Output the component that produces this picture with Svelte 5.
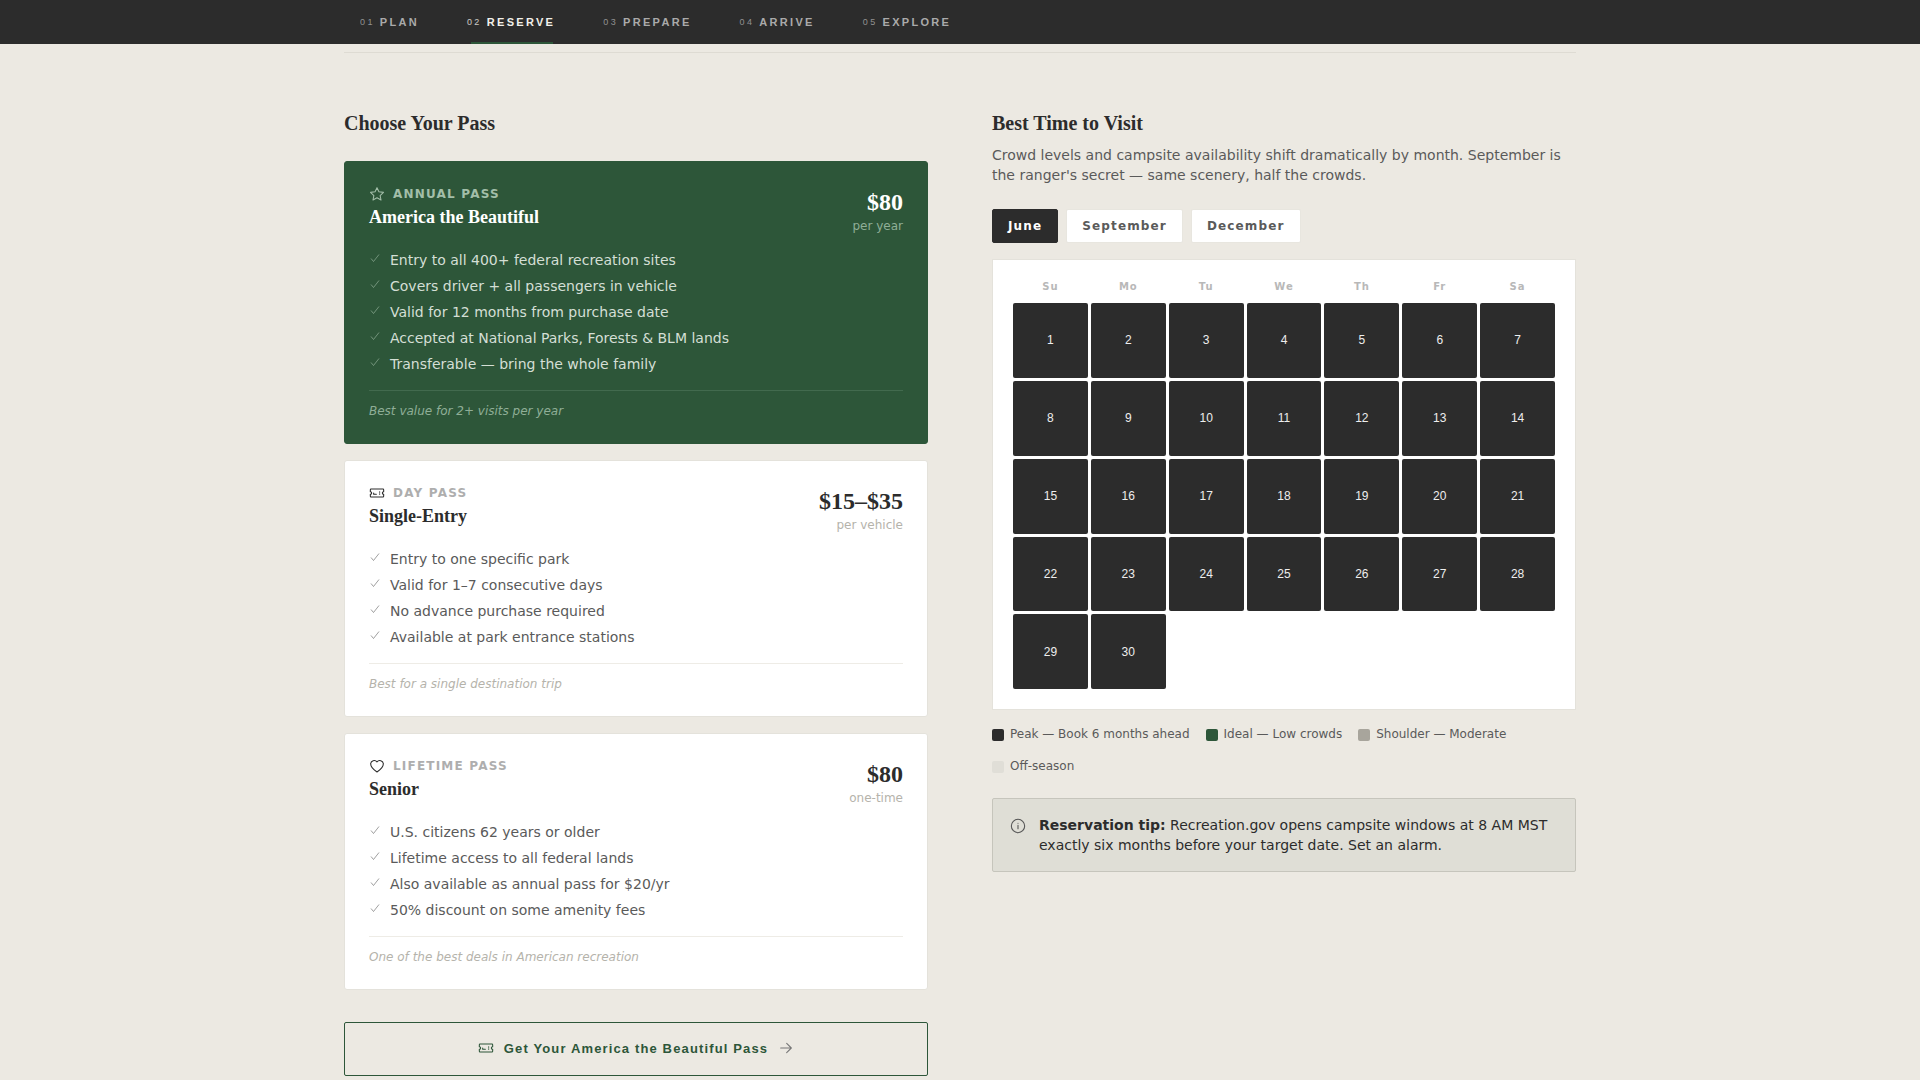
<script>
  const steps = [
    { num: '01', label: 'Plan' },
    { num: '02', label: 'Reserve', active: true },
    { num: '03', label: 'Prepare' },
    { num: '04', label: 'Arrive' },
    { num: '05', label: 'Explore' }
  ];

  const passes = [
    {
      icon: 'star',
      kind: 'Annual Pass',
      title: 'America the Beautiful',
      price: '$80',
      per: 'per year',
      featured: true,
      features: [
        'Entry to all 400+ federal recreation sites',
        'Covers driver + all passengers in vehicle',
        'Valid for 12 months from purchase date',
        'Accepted at National Parks, Forests & BLM lands',
        'Transferable — bring the whole family'
      ],
      note: 'Best value for 2+ visits per year'
    },
    {
      icon: 'ticket',
      kind: 'Day Pass',
      title: 'Single-Entry',
      price: '$15–$35',
      per: 'per vehicle',
      features: [
        'Entry to one specific park',
        'Valid for 1–7 consecutive days',
        'No advance purchase required',
        'Available at park entrance stations'
      ],
      note: 'Best for a single destination trip'
    },
    {
      icon: 'heart',
      kind: 'Lifetime Pass',
      title: 'Senior',
      price: '$80',
      per: 'one-time',
      features: [
        'U.S. citizens 62 years or older',
        'Lifetime access to all federal lands',
        'Also available as annual pass for $20/yr',
        '50% discount on some amenity fees'
      ],
      note: 'One of the best deals in American recreation'
    }
  ];

  const months = ['June', 'September', 'December'];
  const weekdays = ['Su', 'Mo', 'Tu', 'We', 'Th', 'Fr', 'Sa'];
  const days = Array.from({ length: 30 }, (_, i) => i + 1);

  const legend = [
    { label: 'Peak — Book 6 months ahead', color: '#2c2c2c' },
    { label: 'Ideal — Low crowds', color: '#2d5639' },
    { label: 'Shoulder — Moderate', color: '#a8a59c' },
    { label: 'Off-season', color: '#e0ded7' }
  ];
</script>

{#snippet ticket()}
  <svg class="icon" viewBox="0 0 24 24">
    <path d="M2 10a2 2 0 0 1 0 4v3a1 1 0 0 0 1 1h18a1 1 0 0 0 1-1v-3a2 2 0 0 1 0-4V7a1 1 0 0 0-1-1H3a1 1 0 0 0-1 1Z" />
    <path d="M7 14h4M7 12v2M16 10v1M16 13v1" />
  </svg>
{/snippet}

<nav class="topnav">
  <div class="topnav-inner">
    {#each steps as step}
      <div class="step" class:active={step.active}>
        <span class="step-num">{step.num}</span>
        {step.label}
      </div>
    {/each}
  </div>
</nav>

<main class="page">
  <div class="columns">
    <section>
      <h2>Choose Your Pass</h2>

      <div class="passes">
        {#each passes as pass}
          <article class="pass" class:featured={pass.featured}>
            <div class="pass-head">
              <div>
                <div class="pass-kind">
                  {#if pass.icon === 'star'}
                    <svg class="icon" viewBox="0 0 24 24">
                      <path d="M12 2.500l2.900 6.200 6.800.9-5 4.700 1.300 6.700-6-3.300-6 3.300 1.300-6.700-5-4.700 6.800-.9z" />
                    </svg>
                  {:else if pass.icon === 'ticket'}
                    {@render ticket()}
                  {:else}
                    <svg class="icon" viewBox="0 0 24 24">
                      <path d="M12 21s-9.500-6-9.500-12.200A5.300 5.300 0 0 1 12 5.900a5.300 5.300 0 0 1 9.500 2.900C21.500 15 12 21 12 21z" />
                    </svg>
                  {/if}
                  <span>{pass.kind}</span>
                </div>
                <h3>{pass.title}</h3>
              </div>
              <div class="pass-price">
                <div class="price">{pass.price}</div>
                <div class="per">{pass.per}</div>
              </div>
            </div>

            <ul>
              {#each pass.features as feature}
                <li>
                  <svg class="check" viewBox="0 0 24 24"><path d="M4 13l5 6L20 5" /></svg>
                  {feature}
                </li>
              {/each}
            </ul>

            <p class="note">{pass.note}</p>
          </article>
        {/each}
      </div>

      <button class="cta">
        {@render ticket()}
        <span>Get Your America the Beautiful Pass</span>
        <svg class="icon arrow" viewBox="0 0 24 24"><path d="M4 12h16M13 5l7 7-7 7" /></svg>
      </button>
    </section>

    <section>
      <h2>Best Time to Visit</h2>
      <p class="intro">
        Crowd levels and campsite availability shift dramatically by month. September is the
        ranger's secret — same scenery, half the crowds.
      </p>

      <div class="tabs">
        {#each months as month, i}
          <button class="tab" class:selected={i === 0}>{month}</button>
        {/each}
      </div>

      <div class="calendar">
        {#each weekdays as day}
          <div class="weekday">{day}</div>
        {/each}
        {#each days as day}
          <div class="day">{day}</div>
        {/each}
      </div>

      <div class="legend">
        {#each legend as item}
          <div class="legend-item">
            <span class="swatch" style="background: {item.color}"></span>
            {item.label}
          </div>
        {/each}
      </div>

      <div class="tip">
        <svg class="icon" viewBox="0 0 24 24">
          <circle cx="12" cy="12" r="10" />
          <path d="M12 16v-5M12 8h.01" />
        </svg>
        <p><strong>Reservation tip:</strong> Recreation.gov opens campsite windows at 8 AM MST exactly six months before your target date. Set an alarm.</p>
      </div>
    </section>
  </div>
</main>

<style>
  :global(body) {
    margin: 0;
    background: #ece9e2;
    color: #2c2c2c;
    font-family: 'DejaVu Sans', sans-serif;
    overflow: hidden;
  }

  .topnav {
    background: #2c2c2c;
    height: 44px;
  }

  .topnav-inner {
    width: 1232px;
    margin: 0 auto;
    display: flex;
    height: 100%;
    gap: 16px;
  }

  .step {
    position: relative;
    padding: 0 16px;
    display: flex;
    align-items: center;
    gap: 5px;
    font-family: 'Liberation Sans', sans-serif;
    font-size: 11px;
    letter-spacing: 2.3px;
    text-transform: uppercase;
    color: #aaa;
    font-weight: 700;
  }

  .step.active {
    color: #f2f0ea;
  }

  .step.active::after {
    content: '';
    position: absolute;
    left: 20px;
    right: 18px;
    bottom: 0;
    height: 2px;
    background: #2d5639;
  }

  .step-num {
    font-size: 9px;
    letter-spacing: 2.4px;
    opacity: 0.8;
    font-weight: 400;
  }

  .page {
    width: 1232px;
    margin: 0 auto;
    padding-top: 8px;
  }

  .columns {
    border-top: 1px solid #dedbd3;
    padding-top: 59px;
    display: grid;
    grid-template-columns: 584px 584px;
    gap: 64px;
  }

  h2 {
    margin: 0;
    font-family: 'Liberation Serif', serif;
    font-size: 20px;
    line-height: 23px;
    font-weight: 700;
  }

  .passes {
    margin-top: 26px;
    display: flex;
    flex-direction: column;
    gap: 16px;
  }

  .pass {
    background: #fff;
    border: 1px solid #e4e2db;
    border-radius: 3px;
    padding: 25px 24px 24px;
  }

  .pass.featured {
    background: #2d5639;
    border-color: #2d5639;
    color: #fff;
  }

  .pass-head {
    display: flex;
    justify-content: space-between;
    align-items: flex-start;
  }

  .pass-kind {
    display: flex;
    align-items: center;
    gap: 8px;
    height: 14px;
    font-size: 12px;
    line-height: 14px;
    font-weight: 700;
    letter-spacing: 0.1em;
    text-transform: uppercase;
    color: #aeaeae;
  }

  .featured .pass-kind {
    color: #a3bea9;
  }

  .icon {
    width: 16px;
    height: 16px;
    flex: none;
    fill: none;
    stroke: #2c2c2c;
    stroke-width: 1.6;
    stroke-linecap: round;
    stroke-linejoin: round;
  }

  .featured .icon {
    stroke: #a3bea9;
  }

  h3 {
    margin: 6px 0 0;
    font-family: 'Liberation Serif', serif;
    font-size: 18px;
    line-height: 21px;
    font-weight: 700;
  }

  .pass-price {
    text-align: right;
    padding-top: 1px;
  }

  .price {
    font-family: 'Liberation Serif', serif;
    font-size: 24px;
    line-height: 28px;
    font-weight: 700;
  }

  .per {
    font-size: 12px;
    line-height: 15px;
    margin-top: 3px;
    color: #b5b3ab;
  }

  .featured .per {
    color: #8fae97;
  }

  ul {
    list-style: none;
    margin: 13px 0 0;
    padding: 0;
  }

  li {
    display: flex;
    align-items: center;
    font-size: 14px;
    line-height: 26px;
    color: #5a5a5a;
  }

  .featured li {
    color: #d4dfd5;
  }

  .check {
    width: 12px;
    height: 12px;
    margin-right: 9px;
    margin-top: -4px;
    flex: none;
    fill: none;
    stroke: #777;
    stroke-width: 1.4;
  }

  .featured .check {
    stroke: #8fae97;
  }

  .note {
    margin: 13px 0 0;
    padding-top: 13px;
    border-top: 1px solid #eeece6;
    font-size: 12px;
    line-height: 15px;
    font-style: italic;
    color: #b5b3ab;
  }

  .featured .note {
    border-top-color: #426a4e;
    color: #8fae97;
  }

  .cta {
    margin-top: 32px;
    width: 100%;
    height: 54px;
    padding: 0 0 2px;
    display: flex;
    align-items: center;
    justify-content: center;
    gap: 10px;
    background: transparent;
    border: 1px solid #2d5639;
    border-radius: 2px;
    font-family: 'Liberation Sans', sans-serif;
    font-size: 13px;
    font-weight: 700;
    letter-spacing: 1.14px;
    color: #2d5639;
  }

  .cta .icon {
    stroke: #2d5639;
  }

  .cta .arrow {
    stroke: #777;
  }

  .intro {
    margin: 10px 0 0;
    font-size: 14px;
    line-height: 20px;
    color: #5a5a5a;
  }

  .tabs {
    margin-top: 24px;
    display: flex;
    gap: 8px;
  }

  .tab {
    height: 34px;
    padding: 0 15px;
    background: #fff;
    border: 1px solid #e8e6df;
    border-radius: 2px;
    font-family: 'DejaVu Sans', sans-serif;
    font-size: 12px;
    font-weight: 700;
    letter-spacing: 1.14px;
    color: #5a5a5a;
  }

  .tab.selected {
    background: #2c2c2c;
    border-color: #2c2c2c;
    color: #fff;
  }

  .calendar {
    margin-top: 16px;
    background: #fff;
    border: 1px solid #e4e2db;
    padding: 20px;
    display: grid;
    grid-template-columns: repeat(7, 1fr);
    gap: 3px;
  }

  .weekday {
    height: 20px;
    line-height: 14px;
    text-align: center;
    font-size: 10px;
    font-weight: 700;
    letter-spacing: 0.1em;
    color: #b8b8b8;
  }

  .day {
    aspect-ratio: 1;
    display: flex;
    align-items: center;
    justify-content: center;
    background: #2c2c2c;
    color: #eee;
    border-radius: 2px;
    font-family: 'Liberation Sans', sans-serif;
    font-size: 12px;
  }

  .legend {
    margin-top: 16px;
    display: flex;
    flex-wrap: wrap;
    gap: 15px 16px;
  }

  .legend-item {
    display: flex;
    align-items: center;
    gap: 6px;
    font-size: 12px;
    line-height: 17px;
    color: #5a5a5a;
  }

  .swatch {
    width: 12px;
    height: 12px;
    border-radius: 2px;
  }

  .tip {
    margin-top: 23px;
    display: flex;
    align-items: flex-start;
    gap: 13px;
    padding: 16px 20px 16px 17px;
    background: #dfded6;
    border: 1px solid #c6c5bc;
    border-radius: 2px;
  }

  .tip .icon {
    margin-top: 3px;
    stroke: #555;
  }

  .tip p {
    margin: 0;
    font-size: 14px;
    line-height: 20px;
    color: #2c2c2c;
  }
</style>
